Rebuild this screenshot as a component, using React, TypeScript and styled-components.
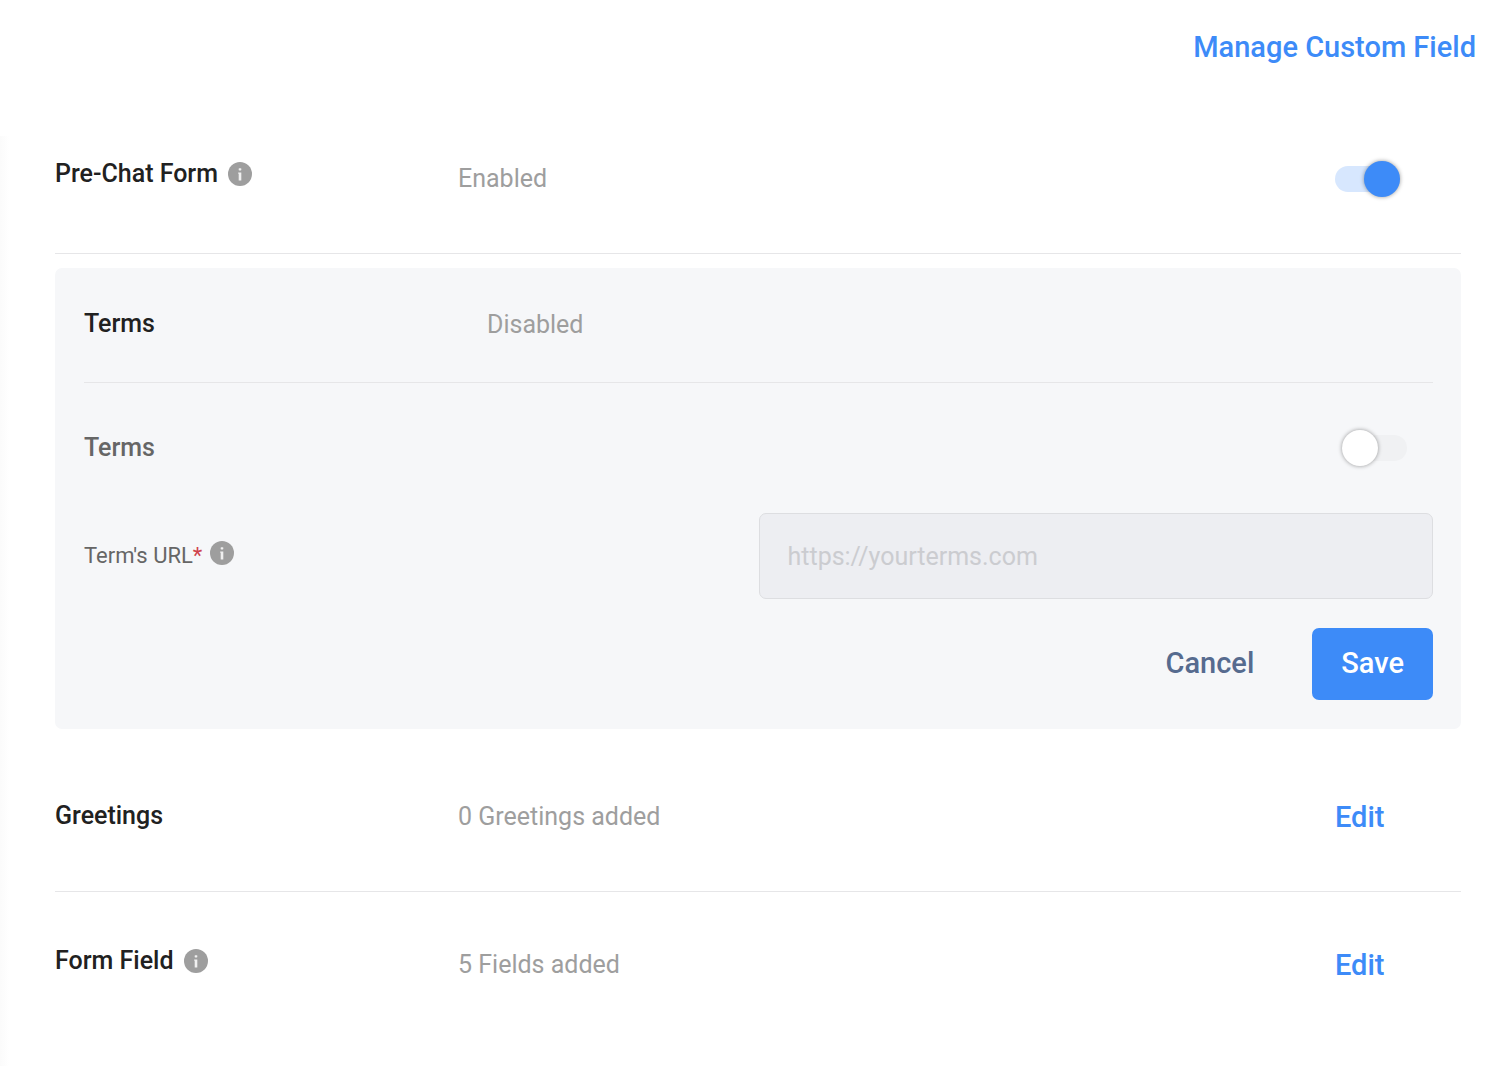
import React, { useState } from "react";
import styled, { createGlobalStyle } from "styled-components";

const color = {
  blue: "#3d8bf8",
  paleBlue: "#d7e7fe",
  ink: "#212121",
  label: "#666666",
  muted: "#9e9e9e",
  line: "#e6e6e8",
  panel: "#f6f7f9",
  field: "#edeef2",
  slate: "#566b8f",
  required: "#d0434c",
};

const GlobalStyle = createGlobalStyle`
  *, *::before, *::after { box-sizing: border-box; }
  body {
    margin: 0;
    background: #fff;
    color: ${color.ink};
    font-family: Roboto, "Liberation Sans", sans-serif;
    font-size: 25px;
    line-height: 30px;
  }
  button, input { font: inherit; }
`;

const Page = styled.div`
  min-height: 100vh;
  display: flex;
  flex-direction: column;
`;

const Header = styled.header`
  display: flex;
  justify-content: flex-end;
  padding: 30px 28px 40px;
`;

const Link = styled.a`
  color: ${color.blue};
  font-size: 29px;
  font-weight: 500;
  line-height: 34px;
  text-decoration: none;
`;

const Main = styled.main`
  flex: 1;
  padding: 0 43px 0 55px;
  background: linear-gradient(to right, #fbfbfb, #fdfdfd 5px, #fff 9px) no-repeat 0 32px;
`;

const Row = styled.section<{ $divider?: boolean; $height: number }>`
  display: grid;
  grid-template-columns: 403px 1fr 126px;
  align-items: center;
  min-height: ${(p) => p.$height}px;
  border-bottom: ${(p) => (p.$divider ? `1px solid ${color.line}` : "none")};
`;

const Title = styled.h2<{ $withInfo?: boolean }>`
  display: flex;
  align-items: center;
  gap: 10px;
  margin: 0;
  padding-bottom: ${(p) => (p.$withInfo ? 9 : 2)}px;
  font-size: 25px;
  font-weight: 500;
`;

const Value = styled.p`
  margin: 0;
  color: ${color.muted};
`;

const Panel = styled.form`
  margin: 14px 0;
  padding: 0 28px 29px 29px;
  border-radius: 7px;
  background: ${color.panel};
`;

const ToggleRow = styled.div`
  display: flex;
  justify-content: space-between;
  align-items: center;
  min-height: 130px;
  padding-right: 26px;
`;

const ToggleLabel = styled.label`
  color: ${color.label};
  font-weight: 500;
`;

const Toggle = styled.input.attrs({ type: "checkbox", role: "switch" })`
  appearance: none;
  display: grid;
  align-items: center;
  width: 65px;
  height: 36px;
  margin: 0;
  cursor: pointer;

  &::before,
  &::after {
    content: "";
    grid-area: 1 / 1;
  }
  &::before {
    height: 26px;
    border-radius: 13px;
    background: #f0f1f3;
  }
  &::after {
    width: 36px;
    height: 36px;
    border-radius: 50%;
    background: #fff;
    box-shadow: 0 0 4px rgba(0, 0, 0, 0.4);
  }
  &:checked::before {
    background: ${color.paleBlue};
  }
  &:checked::after {
    justify-self: end;
    background: ${color.blue};
  }
`;

const FieldRow = styled.div`
  display: grid;
  grid-template-columns: 1fr 1fr;
  align-items: center;
`;

const FieldLabel = styled.div`
  display: flex;
  align-items: flex-start;
  gap: 8px;
  color: ${color.label};
  font-size: 22px;
`;

const Required = styled.span`
  color: ${color.required};
`;

const TextBox = styled.input`
  width: 100%;
  height: 86px;
  padding: 0 28px;
  border: 1px solid #dddee1;
  border-radius: 7px;
  background: ${color.field};

  &::placeholder {
    color: #cbccd0;
    opacity: 1;
  }
`;

const Actions = styled.div`
  display: flex;
  justify-content: flex-end;
  gap: 29px;
  margin-top: 29px;
`;

const Button = styled.button<{ $primary?: boolean }>`
  height: 72px;
  padding: 0 29px 2px;
  border: 0;
  border-radius: 7px;
  background: ${(p) => (p.$primary ? color.blue : "transparent")};
  color: ${(p) => (p.$primary ? "#fff" : color.slate)};
  font-size: 29px;
  font-weight: 500;
  cursor: pointer;
`;

const InfoSvg = styled.svg`
  flex: none;
  width: 24px;
  height: 24px;
`;

function InfoIcon() {
  return (
    <InfoSvg viewBox="0 0 24 24" aria-hidden="true">
      <circle cx="12" cy="12" r="12" fill={color.muted} />
      <rect x="10.7" y="6.2" width="2.6" height="2.2" rx="0.6" fill="#f0f0f0" />
      <path d="M10.2 10.4h3.1v8h-2.6v-6.6h-.5z" fill="#f0f0f0" />
    </InfoSvg>
  );
}

export default function App() {
  const [formEnabled, setFormEnabled] = useState(true);
  const [termsEnabled, setTermsEnabled] = useState(false);

  return (
    <Page>
      <GlobalStyle />
      <Header>
        <Link href="#custom-fields">Manage Custom Field</Link>
      </Header>
      <Main>
        <Row $height={150} $divider>
          <Title $withInfo id="pre-chat">
            Pre-Chat Form
            <InfoIcon />
          </Title>
          <Value>{formEnabled ? "Enabled" : "Disabled"}</Value>
          <Toggle
            aria-labelledby="pre-chat"
            checked={formEnabled}
            onChange={(e) => setFormEnabled(e.target.checked)}
          />
        </Row>
        <Panel onSubmit={(e) => e.preventDefault()}>
          <Row $height={115} $divider>
            <Title>Terms</Title>
            <Value>{termsEnabled ? "Enabled" : "Disabled"}</Value>
          </Row>
          <ToggleRow>
            <ToggleLabel htmlFor="terms">Terms</ToggleLabel>
            <Toggle
              id="terms"
              checked={termsEnabled}
              onChange={(e) => setTermsEnabled(e.target.checked)}
            />
          </ToggleRow>
          <FieldRow>
            <FieldLabel>
              <label htmlFor="terms-url">
                Term's URL<Required>*</Required>
              </label>
              <InfoIcon />
            </FieldLabel>
            <TextBox
              id="terms-url"
              type="url"
              placeholder="https://yourterms.com"
              disabled={!termsEnabled}
            />
          </FieldRow>
          <Actions>
            <Button type="button">Cancel</Button>
            <Button type="submit" $primary>
              Save
            </Button>
          </Actions>
        </Panel>
        <Row $height={149} $divider>
          <Title>Greetings</Title>
          <Value>0 Greetings added</Value>
          <Link href="#greetings">Edit</Link>
        </Row>
        <Row $height={146}>
          <Title $withInfo>
            Form Field
            <InfoIcon />
          </Title>
          <Value>5 Fields added</Value>
          <Link href="#form-fields">Edit</Link>
        </Row>
      </Main>
    </Page>
  );
}
